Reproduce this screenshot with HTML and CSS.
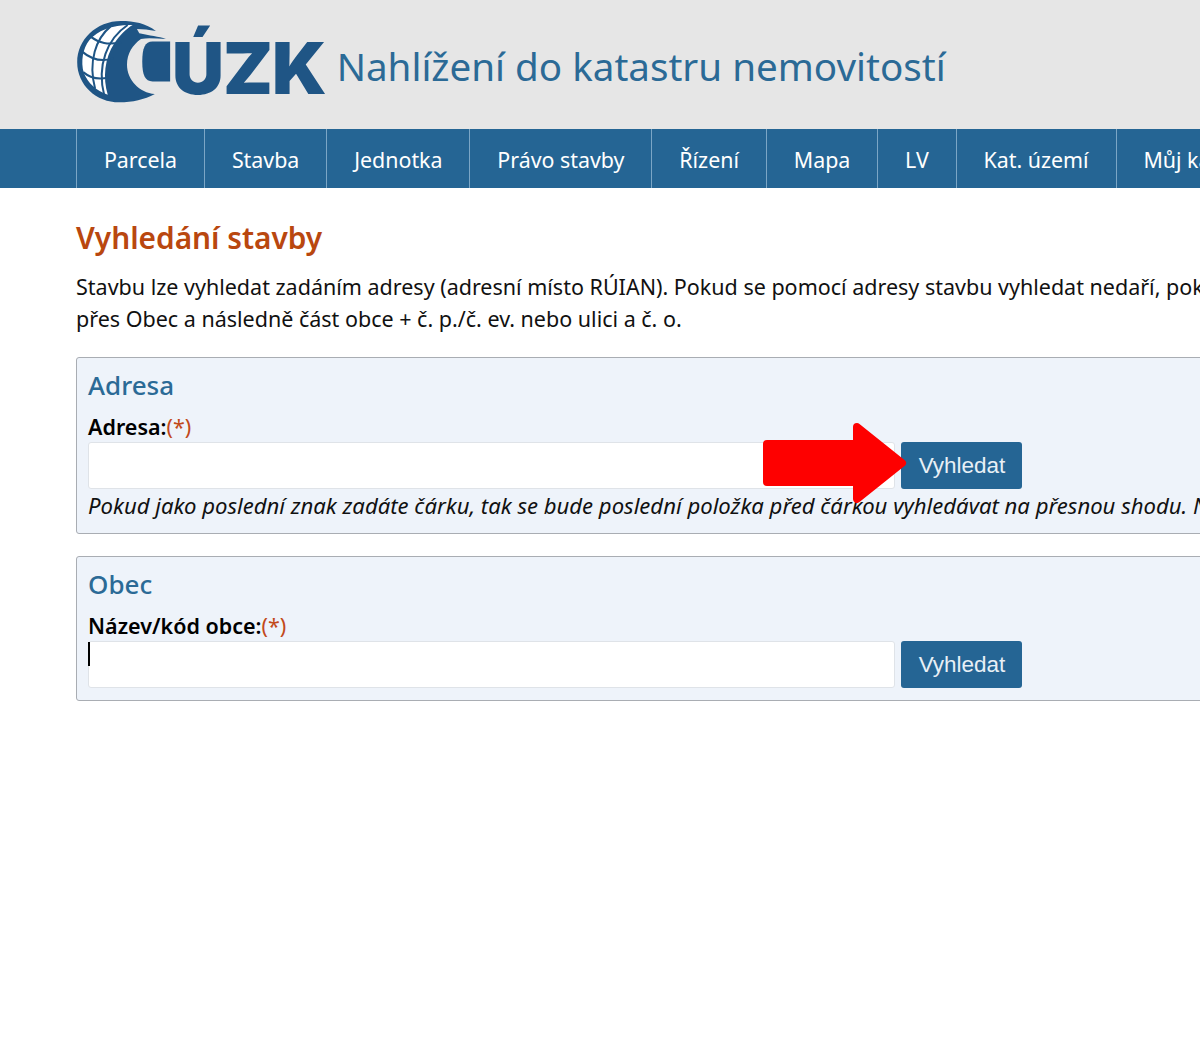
FILE: index.html
```html
<!DOCTYPE html>
<html>
<head>
    <title>Vyhledání stavby</title>
    <link rel="stylesheet" href="styles.css">
</head>
<body>

    <!-- Header -->
    <div class="header">
        <div class="logo">
            <svg class="logo-globe" viewBox="15 15 300 250" width="100" height="83">
                <path class="globe-dark" d="M255 48C225 25 190 18 150 18C75 18 18 75 18 142C18 210 75 263 145 263C185 263 220 255 252 238C205 235 168 195 168 150C168 115 185 90 210 72C235 68 260 72 285 72C265 65 235 62 205 55L198 42C215 42 235 45 255 48Z"/>
                <path class="globe-land" d="M185 30C130 28 80 45 55 75C35 100 28 140 38 175C50 205 75 228 110 240C95 190 100 130 130 85C145 62 165 42 185 30Z"/>
                <g class="globe-grid">
                    <path d="M118 35C75 70 50 140 72 222"/>
                    <path d="M170 30C110 70 75 150 100 245"/>
                    <path d="M58 65C85 85 110 90 150 82"/>
                    <path d="M30 108C65 138 95 142 128 130"/>
                    <path d="M36 172C60 192 85 195 112 188"/>
                </g>
                <path class="globe-dark" d="M245 80H298V200H245C222 200 214 180 214 140C214 100 222 80 245 80Z"/>
            </svg>
            <span class="logo-text">ÚZK</span>
        </div>
        <div class="site-title">Nahlížení do katastru nemovitostí</div>
    </div>

    <!-- Navigation -->
    <div class="nav">
        <a href="#">Parcela</a>
        <a href="#">Stavba</a>
        <a href="#">Jednotka</a>
        <a href="#">Právo stavby</a>
        <a href="#">Řízení</a>
        <a href="#">Mapa</a>
        <a href="#">LV</a>
        <a href="#">Kat. území</a>
        <a href="#">Můj katastr</a>
    </div>

    <!-- Main Content Area -->
    <div class="content">
        <h1>Vyhledání stavby</h1>
        <p class="intro">Stavbu lze vyhledat zadáním adresy (adresní místo RÚIAN). Pokud se pomocí adresy stavbu vyhledat nedaří, pokuste se ji vyhledat<br>přes Obec a následně část obce + č. p./č. ev. nebo ulici a č. o.</p>

        <div class="box">
            <h2>Adresa</h2>
            <label>Adresa:<span class="required">(*)</span></label>
            <div class="search-row">
                <div class="search-input"></div>
                <button type="button">Vyhledat</button>
                <!-- Red arrow over the form -->
                <svg class="arrow" viewBox="0 0 150 90" width="150" height="90">
                    <path d="M7 23H97V6L142 42L97 78V61H7Z"/>
                </svg>
            </div>
            <p class="hint">Pokud jako poslední znak zadáte čárku, tak se bude poslední položka před čárkou vyhledávat na přesnou shodu. Např. „Praha,“</p>
        </div>

        <div class="box">
            <h2>Obec</h2>
            <label>Název/kód obce:<span class="required">(*)</span></label>
            <div class="search-row">
                <div class="search-input"><span class="caret"></span></div>
                <button type="button">Vyhledat</button>
            </div>
        </div>
    </div>

</body>
</html>
```

FILE: styles.css
```css
/* General Body Styles */
body {
    font-family: 'Noto Sans', 'Open Sans', sans-serif;
    background-color: #fff;
    margin: 0;
    padding: 0;
    overflow: hidden;
    height: 1060px;
    color: #111;
}

/* Header */
.header {
    background-color: #e6e6e6;
    height: 129px;
    padding-left: 76px;
    display: flex;
    align-items: flex-start;
}

.logo {
    display: flex;
    align-items: flex-start;
    padding-top: 20px;
}

.logo-globe {
    flex: none;
}

.globe-dark {
    fill: #1f5585;
}

.globe-land {
    fill: #fff;
}

.globe-grid path {
    fill: none;
    stroke: #1f5585;
    stroke-width: 6px;
}

.logo-text {
    font-family: Inter, sans-serif;
    font-weight: 900;
    font-size: 72px;
    line-height: 87px;
    color: #1f5585;
    margin: 4px 0 0 -4px;
    letter-spacing: -1px;
}

.site-title {
    font-size: 38.6px;
    line-height: 54px;
    margin: 39px 0 0 11px;
    color: #2b6a96;
    white-space: nowrap;
}

/* Navigation */
.nav {
    background-color: #256594;
    height: 59px;
    padding-left: 76px;
    display: flex;
    white-space: nowrap;
}

.nav a {
    flex: none;
    display: block;
    border-left: 1px solid #7ba6c6;
    padding: 1px 26.9px 0 26.9px;
    line-height: 59px;
    font-size: 21.4px;
    color: #fff;
    text-decoration: none;
}

/* Main Content Area */
.content {
    padding: 28px 0 0 76px;
    width: 1300px;
}

h1 {
    font-size: 29.8px;
    line-height: 44px;
    font-weight: 600;
    color: #b9470f;
    margin: 0 0 11px;
}

.intro {
    font-size: 21.5px;
    line-height: 32px;
    margin: 0 0 22px;
    white-space: nowrap;
}

/* Search boxes */
.box {
    background-color: #eef3fa;
    border: 1px solid #a9adb3;
    border-radius: 3px;
    padding: 7px 11px 12px;
    margin-bottom: 22px;
}

h2 {
    font-size: 26px;
    line-height: 40px;
    font-weight: 500;
    color: #2b6a96;
    margin: 0;
}

label {
    display: block;
    font-size: 21.5px;
    line-height: 30px;
    font-weight: 600;
    color: #000;
    margin-top: 7px;
}

.required {
    color: #c2491a;
    font-weight: 400;
}

.search-row {
    position: relative;
    display: flex;
    gap: 6px;
}

.search-input {
    width: 805px;
    height: 45px;
    background: #fff;
    border: 1px solid #dfe3e8;
    border-radius: 3px;
}

.caret {
    display: block;
    width: 2px;
    height: 24px;
    margin-left: -1px;
    background: #000;
}

button {
    background-color: #256594;
    color: #e8f0f6;
    font-family: 'Liberation Sans', sans-serif;
    font-size: 22.5px;
    width: 121px;
    height: 47px;
    padding: 0 0 0 1px;
    border: none;
    border-radius: 3px;
}

.arrow {
    position: absolute;
    left: 672px;
    top: -21px;
}

.arrow path {
    fill: #fe0000;
    stroke: #fe0000;
    stroke-width: 8px;
    stroke-linejoin: round;
}

.hint {
    font-size: 22.1px;
    font-style: italic;
    line-height: 31px;
    margin: 1px 0 0;
    white-space: nowrap;
}
```
